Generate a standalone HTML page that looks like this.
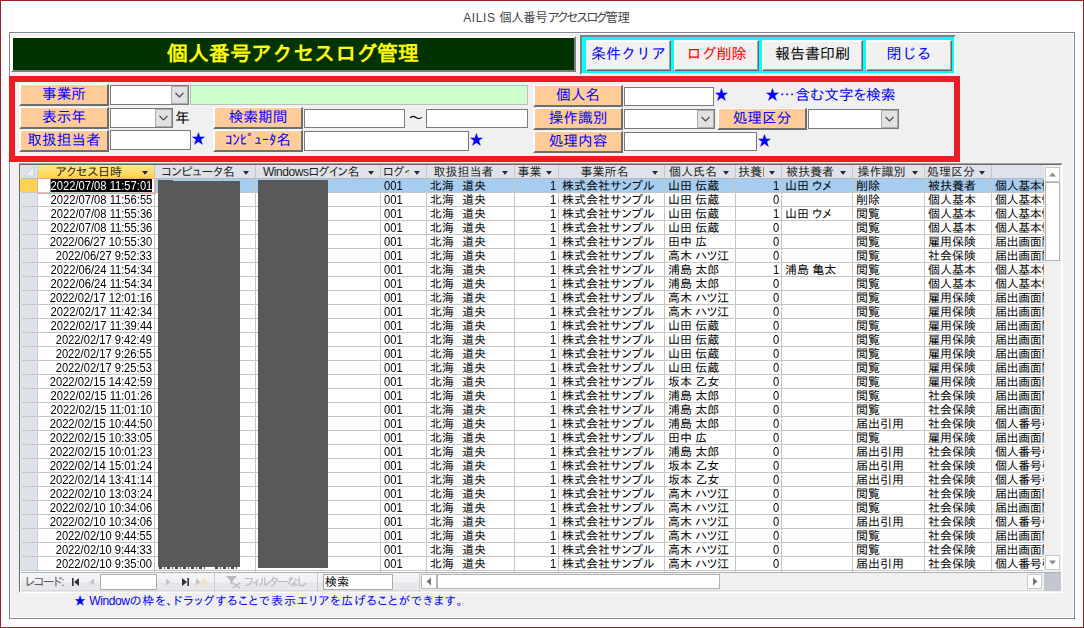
<!DOCTYPE html>
<html lang="ja"><head><meta charset="utf-8"><title>AILIS 個人番号アクセスログ管理</title>
<style>
html,body{margin:0;padding:0}
body{width:1084px;height:628px;position:relative;overflow:hidden;background:#fff;
 font-family:"Liberation Sans","IPAPGothic","IPAGothic",sans-serif;font-size:12px;color:#000}
.a{position:absolute;box-sizing:border-box}
#win{left:0;top:0;width:1084px;height:628px;border:1px solid #9c2026}
#ttl{left:0;top:9px;width:1084px;text-align:center;font-family:"Liberation Sans","Noto Sans CJK JP",sans-serif;font-size:12px;line-height:18px;color:#444;padding-left:9px}
#ttl span{letter-spacing:-2.2px}
#form{left:9px;top:32px;width:1066px;height:587px;background:#f0f0f0;border:1px solid #828790;box-shadow:inset 0 0 0 1px #fff}
#gbox{left:11px;top:36px;width:565px;height:36px;border-style:solid;border-width:2px;border-color:#fff #808080 #808080 #fff;background:#003300;
 color:#ffff00;font-weight:bold;font-size:21px;line-height:32px;text-align:center;font-family:"Liberation Sans","IPAGothic",sans-serif;padding-right:1px}
#cbox{left:580px;top:35px;width:376px;height:40px;border-style:solid;border-width:2px;border-color:#808080 #fff #fff #808080;background:#00ffff}
.tb{top:40px;height:31px;background:#f0f0f0;border-style:solid;border-width:1px;border-color:#fff #696969 #696969 #fff;
 font-family:"Liberation Sans","IPAGothic",sans-serif;font-size:15px;line-height:26px;text-align:center;color:#0000ff;box-shadow:inset -1px -1px 0 #a0a0a0, inset 1px 1px 0 #fff}
#red{left:9px;top:76px;width:951px;height:86px;border:6px solid #ed1c24}
.lb{width:90px;height:22px;background:#ffcc99;border-style:solid;border-width:1px 2px 2px 2px;border-color:#fff #6e6e6e #6e6e6e #fff;
 color:#0000ff;font-size:14.67px;line-height:18px;text-align:center;white-space:nowrap;letter-spacing:0px}
.in{background:#fff;border:1px solid #7a7a7a}
.dd{background:#e1e1e1;border:1px solid #adadad}
.dd svg{position:absolute;left:3px;top:5px}
.st{color:#0000ff;font-size:14.67px;line-height:16px;white-space:nowrap}
/* table */
#tfr{left:19px;top:163px;width:1044px;height:430px;border-style:solid;border-width:2px 2px 2px 1px;border-color:#a0a0a0 #fff #fff #696969;background:#fff}
.hd{top:165px;height:13px;background:#dfe3e9;font-size:12px;line-height:14px;white-space:nowrap;overflow:hidden;color:#222;text-align:center}
.hd.sel{background:linear-gradient(#ffe98f,#ffd24a)}
.ha{top:165px;height:13px;width:14px;background:#dfe3e9}
.ha.sel{background:linear-gradient(#ffe98f,#ffd24a)}
.ha i{position:absolute;left:2px;top:6px;width:0;height:0;border-left:3.5px solid transparent;border-right:3.5px solid transparent;border-top:4px solid #232834;filter:drop-shadow(0 1px 0 rgba(255,255,255,.7))}
.vl{width:1px;background:#c6c6c6;top:165px;height:407px}
.hl{height:1px;background:#c6c6c6;left:21px;width:1023px}
.c{height:13px;line-height:15px;font-size:12px;white-space:nowrap;overflow:hidden}
.n{display:inline-block;font-size:13px;transform:scaleX(.86);transform-origin:0 50%;position:relative;top:-1px}
.r .n{transform-origin:100% 50%;position:absolute;right:0;top:-1px}
.sp{letter-spacing:-4px}
.d{text-align:right}
.r{text-align:right}
.rs{left:20px;width:17px;height:13px;background:#dde1e8}
#nav{left:21px;top:573px;width:398px;height:19px;background:linear-gradient(#f4f5f7 0,#f0f1f4 45%,#e4e6ea 55%,#e6e8ec 100%)}
</style></head><body>
<div class="a" id="win"></div>
<div class="a" id="ttl"><b style="font-weight:normal;letter-spacing:.6px">AILIS </b>個人番号<span>アクセスログ</span>管理</div>
<div class="a" id="form"></div>
<div class="a" id="gbox">個人番号アクセスログ管理</div>
<div class="a" id="cbox"></div>
<div class="a tb" style="left:586px;width:85px">条件クリア</div>
<div class="a tb" style="left:674px;width:85px;color:#ff0000">ログ削除</div>
<div class="a tb" style="left:762px;width:101px;color:#000">報告書印刷</div>
<div class="a tb" style="left:866px;width:86px">閉じる</div>
<div class="a" id="red"></div>

<div class="a lb" style="left:19px;top:84px;width:90px">事業所</div>
<div class="a lb" style="left:19px;top:107px;width:90px">表示年</div>
<div class="a lb" style="left:19px;top:130px;width:90px">取扱担当者</div>
<div class="a in" style="left:110px;top:85px;width:79px;height:20px;"></div>
<div class="a dd" style="left:171px;top:86px;width:17px;height:18px"><svg width="9" height="6" viewBox="0 0 9 6"><path d="M0.5 0.8 L4.5 4.8 L8.5 0.8" fill="none" stroke="#444" stroke-width="1.2"/></svg></div>
<div class="a in" style="left:190px;top:85px;width:338px;height:20px;background:#ccffcc;border-color:#bdbdbd"></div>
<div class="a in" style="left:110px;top:108px;width:63px;height:20px;"></div>
<div class="a dd" style="left:155px;top:109px;width:17px;height:18px"><svg width="9" height="6" viewBox="0 0 9 6"><path d="M0.5 0.8 L4.5 4.8 L8.5 0.8" fill="none" stroke="#444" stroke-width="1.2"/></svg></div>
<div class="a" style="left:175px;top:109px;font-size:14.67px;line-height:18px">年</div>
<div class="a in" style="left:110px;top:130px;width:81px;height:20px;"></div>
<div class="a st" style="left:191px;top:131px">★</div>
<div class="a lb" style="left:213px;top:107px;width:90px">検索期間</div>
<div class="a lb" style="left:213px;top:130px;width:90px">ｺﾝﾋﾟｭｰﾀ名</div>
<div class="a in" style="left:304px;top:109px;width:101px;height:19px;"></div>
<div class="a" style="left:409px;top:109px;font-size:14.67px;line-height:18px">～</div>
<div class="a in" style="left:426px;top:109px;width:102px;height:19px;"></div>
<div class="a in" style="left:304px;top:131px;width:165px;height:20px;"></div>
<div class="a st" style="left:469px;top:132px">★</div>
<div class="a lb" style="left:533px;top:85px;width:90px">個人名</div>
<div class="a lb" style="left:533px;top:108px;width:90px">操作識別</div>
<div class="a lb" style="left:533px;top:131px;width:90px">処理内容</div>
<div class="a in" style="left:624px;top:87px;width:90px;height:19px;"></div>
<div class="a st" style="left:714px;top:87px">★</div>
<div class="a st" style="left:765px;top:87px;font-family:IPAPGothic,IPAGothic,sans-serif">★…<span style="margin-left:-3px"> 含む文字を検索</span></div>
<div class="a in" style="left:624px;top:109px;width:91px;height:20px;"></div>
<div class="a dd" style="left:697px;top:110px;width:17px;height:18px"><svg width="9" height="6" viewBox="0 0 9 6"><path d="M0.5 0.8 L4.5 4.8 L8.5 0.8" fill="none" stroke="#444" stroke-width="1.2"/></svg></div>
<div class="a lb" style="left:717px;top:108px;width:90px">処理区分</div>
<div class="a in" style="left:808px;top:109px;width:91px;height:20px;"></div>
<div class="a dd" style="left:881px;top:110px;width:17px;height:18px"><svg width="9" height="6" viewBox="0 0 9 6"><path d="M0.5 0.8 L4.5 4.8 L8.5 0.8" fill="none" stroke="#444" stroke-width="1.2"/></svg></div>
<div class="a in" style="left:624px;top:132px;width:133px;height:19px;"></div>
<div class="a st" style="left:757px;top:133px">★</div>
<div class="a" id="tfr"></div>
<div class="a" style="left:19px;top:164px;width:1042px;height:1px;background:#696969"></div>
<div class="a" style="left:20px;top:165px;width:17px;height:13px;background:#dde1e8"><svg width="17" height="13" style="position:absolute;left:0;top:0"><path d="M14 1.5 L14 11 L4.5 11 Z" fill="#eef0f4" stroke="#b9c6d9" stroke-width="0.8"/></svg></div>
<div class="a hd sel" style="left:38px;width:102px">アクセス日時</div>
<div class="a ha sel" style="left:140px"><i></i></div>
<div class="a hd" style="left:155px;width:86px">コンピュータ名</div>
<div class="a ha" style="left:241px"><i></i></div>
<div class="a hd" style="left:256px;width:110px;letter-spacing:-0.45px">Windowsログイン名</div>
<div class="a ha" style="left:366px"><i></i></div>
<div class="a hd" style="left:381px;width:31px"></div>
<div class="a hd" style="left:383px;width:26px;text-align:left">ログイン</div>
<div class="a ha" style="left:412px"><i></i></div>
<div class="a hd" style="left:427px;width:73px">取扱担当者</div>
<div class="a ha" style="left:500px"><i></i></div>
<div class="a hd" style="left:515px;width:29px">事業</div>
<div class="a ha" style="left:544px"><i></i></div>
<div class="a hd" style="left:559px;width:91px">事業所名</div>
<div class="a ha" style="left:650px"><i></i></div>
<div class="a hd" style="left:665px;width:56px">個人氏名</div>
<div class="a ha" style="left:721px"><i></i></div>
<div class="a hd" style="left:736px;width:31px"></div>
<div class="a hd" style="left:738px;width:26px;text-align:left">扶養区分</div>
<div class="a ha" style="left:767px"><i></i></div>
<div class="a hd" style="left:782px;width:56px">被扶養者</div>
<div class="a ha" style="left:838px"><i></i></div>
<div class="a hd" style="left:853px;width:57px">操作識別</div>
<div class="a ha" style="left:910px"><i></i></div>
<div class="a hd" style="left:925px;width:52px">処理区分</div>
<div class="a ha" style="left:977px"><i></i></div>
<div class="a hd" style="left:992px;width:52px"></div>
<div class="a hl" style="top:178px;background:#b4b9c2"></div>
<div class="a" style="left:38px;top:179px;width:1006px;height:13px;background:#a6cdf0"></div>
<div class="a" style="left:20px;top:179px;width:17px;height:13px;background:#ffd24d"></div>
<div class="a" style="left:38px;top:179px;width:116px;height:13px;background:#fff"></div>
<div class="a c r" style="top:179px;left:38px;width:114px"><span class="n" style="background:#000;color:#fff">2022/07/08 11:57:01</span></div>
<div class="a c" style="top:179px;left:384px;width:42px"><span class="n">001</span></div>
<div class="a c" style="top:179px;left:430px;width:84px">北海<span class="sp">　</span>道央</div>
<div class="a c r" style="top:179px;left:515px;width:41px"><span class="n">1</span></div>
<div class="a c" style="top:179px;left:562px;width:102px">株式会社サンプル</div>
<div class="a c" style="top:179px;left:668px;width:67px">山田 伝蔵</div>
<div class="a c r" style="top:179px;left:736px;width:43px"><span class="n">1</span></div>
<div class="a c" style="top:179px;left:785px;width:67px">山田 ウメ</div>
<div class="a c" style="top:179px;left:856px;width:68px">削除</div>
<div class="a c" style="top:179px;left:928px;width:63px">被扶養者</div>
<div class="a c" style="top:179px;left:995px;width:49px;letter-spacing:-0.4px">個人基本情報</div>
<div class="a hl" style="top:192px"></div>
<div class="a rs" style="top:193px"></div>
<div class="a c r" style="top:193px;left:38px;width:114px"><span class="n">2022/07/08 11:56:55</span></div>
<div class="a c" style="top:193px;left:384px;width:42px"><span class="n">001</span></div>
<div class="a c" style="top:193px;left:430px;width:84px">北海<span class="sp">　</span>道央</div>
<div class="a c r" style="top:193px;left:515px;width:41px"><span class="n">1</span></div>
<div class="a c" style="top:193px;left:562px;width:102px">株式会社サンプル</div>
<div class="a c" style="top:193px;left:668px;width:67px">山田 伝蔵</div>
<div class="a c r" style="top:193px;left:736px;width:43px"><span class="n">0</span></div>
<div class="a c" style="top:193px;left:856px;width:68px">削除</div>
<div class="a c" style="top:193px;left:928px;width:63px">個人基本</div>
<div class="a c" style="top:193px;left:995px;width:49px;letter-spacing:-0.4px">個人基本情報</div>
<div class="a hl" style="top:206px"></div>
<div class="a rs" style="top:207px"></div>
<div class="a c r" style="top:207px;left:38px;width:114px"><span class="n">2022/07/08 11:55:36</span></div>
<div class="a c" style="top:207px;left:384px;width:42px"><span class="n">001</span></div>
<div class="a c" style="top:207px;left:430px;width:84px">北海<span class="sp">　</span>道央</div>
<div class="a c r" style="top:207px;left:515px;width:41px"><span class="n">1</span></div>
<div class="a c" style="top:207px;left:562px;width:102px">株式会社サンプル</div>
<div class="a c" style="top:207px;left:668px;width:67px">山田 伝蔵</div>
<div class="a c r" style="top:207px;left:736px;width:43px"><span class="n">1</span></div>
<div class="a c" style="top:207px;left:785px;width:67px">山田 ウメ</div>
<div class="a c" style="top:207px;left:856px;width:68px">閲覧</div>
<div class="a c" style="top:207px;left:928px;width:63px">個人基本</div>
<div class="a c" style="top:207px;left:995px;width:49px;letter-spacing:-0.4px">個人基本情報</div>
<div class="a hl" style="top:220px"></div>
<div class="a rs" style="top:221px"></div>
<div class="a c r" style="top:221px;left:38px;width:114px"><span class="n">2022/07/08 11:55:36</span></div>
<div class="a c" style="top:221px;left:384px;width:42px"><span class="n">001</span></div>
<div class="a c" style="top:221px;left:430px;width:84px">北海<span class="sp">　</span>道央</div>
<div class="a c r" style="top:221px;left:515px;width:41px"><span class="n">1</span></div>
<div class="a c" style="top:221px;left:562px;width:102px">株式会社サンプル</div>
<div class="a c" style="top:221px;left:668px;width:67px">山田 伝蔵</div>
<div class="a c r" style="top:221px;left:736px;width:43px"><span class="n">0</span></div>
<div class="a c" style="top:221px;left:856px;width:68px">閲覧</div>
<div class="a c" style="top:221px;left:928px;width:63px">個人基本</div>
<div class="a c" style="top:221px;left:995px;width:49px;letter-spacing:-0.4px">個人基本情報</div>
<div class="a hl" style="top:234px"></div>
<div class="a rs" style="top:235px"></div>
<div class="a c r" style="top:235px;left:38px;width:114px"><span class="n">2022/06/27 10:55:30</span></div>
<div class="a c" style="top:235px;left:384px;width:42px"><span class="n">001</span></div>
<div class="a c" style="top:235px;left:430px;width:84px">北海<span class="sp">　</span>道央</div>
<div class="a c r" style="top:235px;left:515px;width:41px"><span class="n">1</span></div>
<div class="a c" style="top:235px;left:562px;width:102px">株式会社サンプル</div>
<div class="a c" style="top:235px;left:668px;width:67px">田中 広</div>
<div class="a c r" style="top:235px;left:736px;width:43px"><span class="n">0</span></div>
<div class="a c" style="top:235px;left:856px;width:68px">閲覧</div>
<div class="a c" style="top:235px;left:928px;width:63px">雇用保険</div>
<div class="a c" style="top:235px;left:995px;width:49px;letter-spacing:-0.4px">届出画面閲覧</div>
<div class="a hl" style="top:248px"></div>
<div class="a rs" style="top:249px"></div>
<div class="a c r" style="top:249px;left:38px;width:114px"><span class="n">2022/06/27 9:52:33</span></div>
<div class="a c" style="top:249px;left:384px;width:42px"><span class="n">001</span></div>
<div class="a c" style="top:249px;left:430px;width:84px">北海<span class="sp">　</span>道央</div>
<div class="a c r" style="top:249px;left:515px;width:41px"><span class="n">1</span></div>
<div class="a c" style="top:249px;left:562px;width:102px">株式会社サンプル</div>
<div class="a c" style="top:249px;left:668px;width:67px">高木 ハツ江</div>
<div class="a c r" style="top:249px;left:736px;width:43px"><span class="n">0</span></div>
<div class="a c" style="top:249px;left:856px;width:68px">閲覧</div>
<div class="a c" style="top:249px;left:928px;width:63px">社会保険</div>
<div class="a c" style="top:249px;left:995px;width:49px;letter-spacing:-0.4px">届出画面閲覧</div>
<div class="a hl" style="top:262px"></div>
<div class="a rs" style="top:263px"></div>
<div class="a c r" style="top:263px;left:38px;width:114px"><span class="n">2022/06/24 11:54:34</span></div>
<div class="a c" style="top:263px;left:384px;width:42px"><span class="n">001</span></div>
<div class="a c" style="top:263px;left:430px;width:84px">北海<span class="sp">　</span>道央</div>
<div class="a c r" style="top:263px;left:515px;width:41px"><span class="n">1</span></div>
<div class="a c" style="top:263px;left:562px;width:102px">株式会社サンプル</div>
<div class="a c" style="top:263px;left:668px;width:67px">浦島 太郎</div>
<div class="a c r" style="top:263px;left:736px;width:43px"><span class="n">1</span></div>
<div class="a c" style="top:263px;left:785px;width:67px">浦島 亀太</div>
<div class="a c" style="top:263px;left:856px;width:68px">閲覧</div>
<div class="a c" style="top:263px;left:928px;width:63px">個人基本</div>
<div class="a c" style="top:263px;left:995px;width:49px;letter-spacing:-0.4px">個人基本情報</div>
<div class="a hl" style="top:276px"></div>
<div class="a rs" style="top:277px"></div>
<div class="a c r" style="top:277px;left:38px;width:114px"><span class="n">2022/06/24 11:54:34</span></div>
<div class="a c" style="top:277px;left:384px;width:42px"><span class="n">001</span></div>
<div class="a c" style="top:277px;left:430px;width:84px">北海<span class="sp">　</span>道央</div>
<div class="a c r" style="top:277px;left:515px;width:41px"><span class="n">1</span></div>
<div class="a c" style="top:277px;left:562px;width:102px">株式会社サンプル</div>
<div class="a c" style="top:277px;left:668px;width:67px">浦島 太郎</div>
<div class="a c r" style="top:277px;left:736px;width:43px"><span class="n">0</span></div>
<div class="a c" style="top:277px;left:856px;width:68px">閲覧</div>
<div class="a c" style="top:277px;left:928px;width:63px">個人基本</div>
<div class="a c" style="top:277px;left:995px;width:49px;letter-spacing:-0.4px">個人基本情報</div>
<div class="a hl" style="top:290px"></div>
<div class="a rs" style="top:291px"></div>
<div class="a c r" style="top:291px;left:38px;width:114px"><span class="n">2022/02/17 12:01:16</span></div>
<div class="a c" style="top:291px;left:384px;width:42px"><span class="n">001</span></div>
<div class="a c" style="top:291px;left:430px;width:84px">北海<span class="sp">　</span>道央</div>
<div class="a c r" style="top:291px;left:515px;width:41px"><span class="n">1</span></div>
<div class="a c" style="top:291px;left:562px;width:102px">株式会社サンプル</div>
<div class="a c" style="top:291px;left:668px;width:67px">高木 ハツ江</div>
<div class="a c r" style="top:291px;left:736px;width:43px"><span class="n">0</span></div>
<div class="a c" style="top:291px;left:856px;width:68px">閲覧</div>
<div class="a c" style="top:291px;left:928px;width:63px">雇用保険</div>
<div class="a c" style="top:291px;left:995px;width:49px;letter-spacing:-0.4px">届出画面閲覧</div>
<div class="a hl" style="top:304px"></div>
<div class="a rs" style="top:305px"></div>
<div class="a c r" style="top:305px;left:38px;width:114px"><span class="n">2022/02/17 11:42:34</span></div>
<div class="a c" style="top:305px;left:384px;width:42px"><span class="n">001</span></div>
<div class="a c" style="top:305px;left:430px;width:84px">北海<span class="sp">　</span>道央</div>
<div class="a c r" style="top:305px;left:515px;width:41px"><span class="n">1</span></div>
<div class="a c" style="top:305px;left:562px;width:102px">株式会社サンプル</div>
<div class="a c" style="top:305px;left:668px;width:67px">高木 ハツ江</div>
<div class="a c r" style="top:305px;left:736px;width:43px"><span class="n">0</span></div>
<div class="a c" style="top:305px;left:856px;width:68px">閲覧</div>
<div class="a c" style="top:305px;left:928px;width:63px">雇用保険</div>
<div class="a c" style="top:305px;left:995px;width:49px;letter-spacing:-0.4px">届出画面閲覧</div>
<div class="a hl" style="top:318px"></div>
<div class="a rs" style="top:319px"></div>
<div class="a c r" style="top:319px;left:38px;width:114px"><span class="n">2022/02/17 11:39:44</span></div>
<div class="a c" style="top:319px;left:384px;width:42px"><span class="n">001</span></div>
<div class="a c" style="top:319px;left:430px;width:84px">北海<span class="sp">　</span>道央</div>
<div class="a c r" style="top:319px;left:515px;width:41px"><span class="n">1</span></div>
<div class="a c" style="top:319px;left:562px;width:102px">株式会社サンプル</div>
<div class="a c" style="top:319px;left:668px;width:67px">山田 伝蔵</div>
<div class="a c r" style="top:319px;left:736px;width:43px"><span class="n">0</span></div>
<div class="a c" style="top:319px;left:856px;width:68px">閲覧</div>
<div class="a c" style="top:319px;left:928px;width:63px">雇用保険</div>
<div class="a c" style="top:319px;left:995px;width:49px;letter-spacing:-0.4px">届出画面閲覧</div>
<div class="a hl" style="top:332px"></div>
<div class="a rs" style="top:333px"></div>
<div class="a c r" style="top:333px;left:38px;width:114px"><span class="n">2022/02/17 9:42:49</span></div>
<div class="a c" style="top:333px;left:384px;width:42px"><span class="n">001</span></div>
<div class="a c" style="top:333px;left:430px;width:84px">北海<span class="sp">　</span>道央</div>
<div class="a c r" style="top:333px;left:515px;width:41px"><span class="n">1</span></div>
<div class="a c" style="top:333px;left:562px;width:102px">株式会社サンプル</div>
<div class="a c" style="top:333px;left:668px;width:67px">山田 伝蔵</div>
<div class="a c r" style="top:333px;left:736px;width:43px"><span class="n">0</span></div>
<div class="a c" style="top:333px;left:856px;width:68px">閲覧</div>
<div class="a c" style="top:333px;left:928px;width:63px">雇用保険</div>
<div class="a c" style="top:333px;left:995px;width:49px;letter-spacing:-0.4px">届出画面閲覧</div>
<div class="a hl" style="top:346px"></div>
<div class="a rs" style="top:347px"></div>
<div class="a c r" style="top:347px;left:38px;width:114px"><span class="n">2022/02/17 9:26:55</span></div>
<div class="a c" style="top:347px;left:384px;width:42px"><span class="n">001</span></div>
<div class="a c" style="top:347px;left:430px;width:84px">北海<span class="sp">　</span>道央</div>
<div class="a c r" style="top:347px;left:515px;width:41px"><span class="n">1</span></div>
<div class="a c" style="top:347px;left:562px;width:102px">株式会社サンプル</div>
<div class="a c" style="top:347px;left:668px;width:67px">山田 伝蔵</div>
<div class="a c r" style="top:347px;left:736px;width:43px"><span class="n">0</span></div>
<div class="a c" style="top:347px;left:856px;width:68px">閲覧</div>
<div class="a c" style="top:347px;left:928px;width:63px">雇用保険</div>
<div class="a c" style="top:347px;left:995px;width:49px;letter-spacing:-0.4px">届出画面閲覧</div>
<div class="a hl" style="top:360px"></div>
<div class="a rs" style="top:361px"></div>
<div class="a c r" style="top:361px;left:38px;width:114px"><span class="n">2022/02/17 9:25:53</span></div>
<div class="a c" style="top:361px;left:384px;width:42px"><span class="n">001</span></div>
<div class="a c" style="top:361px;left:430px;width:84px">北海<span class="sp">　</span>道央</div>
<div class="a c r" style="top:361px;left:515px;width:41px"><span class="n">1</span></div>
<div class="a c" style="top:361px;left:562px;width:102px">株式会社サンプル</div>
<div class="a c" style="top:361px;left:668px;width:67px">山田 伝蔵</div>
<div class="a c r" style="top:361px;left:736px;width:43px"><span class="n">0</span></div>
<div class="a c" style="top:361px;left:856px;width:68px">閲覧</div>
<div class="a c" style="top:361px;left:928px;width:63px">雇用保険</div>
<div class="a c" style="top:361px;left:995px;width:49px;letter-spacing:-0.4px">届出画面閲覧</div>
<div class="a hl" style="top:374px"></div>
<div class="a rs" style="top:375px"></div>
<div class="a c r" style="top:375px;left:38px;width:114px"><span class="n">2022/02/15 14:42:59</span></div>
<div class="a c" style="top:375px;left:384px;width:42px"><span class="n">001</span></div>
<div class="a c" style="top:375px;left:430px;width:84px">北海<span class="sp">　</span>道央</div>
<div class="a c r" style="top:375px;left:515px;width:41px"><span class="n">1</span></div>
<div class="a c" style="top:375px;left:562px;width:102px">株式会社サンプル</div>
<div class="a c" style="top:375px;left:668px;width:67px">坂本 乙女</div>
<div class="a c r" style="top:375px;left:736px;width:43px"><span class="n">0</span></div>
<div class="a c" style="top:375px;left:856px;width:68px">閲覧</div>
<div class="a c" style="top:375px;left:928px;width:63px">雇用保険</div>
<div class="a c" style="top:375px;left:995px;width:49px;letter-spacing:-0.4px">届出画面閲覧</div>
<div class="a hl" style="top:388px"></div>
<div class="a rs" style="top:389px"></div>
<div class="a c r" style="top:389px;left:38px;width:114px"><span class="n">2022/02/15 11:01:26</span></div>
<div class="a c" style="top:389px;left:384px;width:42px"><span class="n">001</span></div>
<div class="a c" style="top:389px;left:430px;width:84px">北海<span class="sp">　</span>道央</div>
<div class="a c r" style="top:389px;left:515px;width:41px"><span class="n">1</span></div>
<div class="a c" style="top:389px;left:562px;width:102px">株式会社サンプル</div>
<div class="a c" style="top:389px;left:668px;width:67px">浦島 太郎</div>
<div class="a c r" style="top:389px;left:736px;width:43px"><span class="n">0</span></div>
<div class="a c" style="top:389px;left:856px;width:68px">閲覧</div>
<div class="a c" style="top:389px;left:928px;width:63px">社会保険</div>
<div class="a c" style="top:389px;left:995px;width:49px;letter-spacing:-0.4px">届出画面閲覧</div>
<div class="a hl" style="top:402px"></div>
<div class="a rs" style="top:403px"></div>
<div class="a c r" style="top:403px;left:38px;width:114px"><span class="n">2022/02/15 11:01:10</span></div>
<div class="a c" style="top:403px;left:384px;width:42px"><span class="n">001</span></div>
<div class="a c" style="top:403px;left:430px;width:84px">北海<span class="sp">　</span>道央</div>
<div class="a c r" style="top:403px;left:515px;width:41px"><span class="n">1</span></div>
<div class="a c" style="top:403px;left:562px;width:102px">株式会社サンプル</div>
<div class="a c" style="top:403px;left:668px;width:67px">浦島 太郎</div>
<div class="a c r" style="top:403px;left:736px;width:43px"><span class="n">0</span></div>
<div class="a c" style="top:403px;left:856px;width:68px">閲覧</div>
<div class="a c" style="top:403px;left:928px;width:63px">社会保険</div>
<div class="a c" style="top:403px;left:995px;width:49px;letter-spacing:-0.4px">届出画面閲覧</div>
<div class="a hl" style="top:416px"></div>
<div class="a rs" style="top:417px"></div>
<div class="a c r" style="top:417px;left:38px;width:114px"><span class="n">2022/02/15 10:44:50</span></div>
<div class="a c" style="top:417px;left:384px;width:42px"><span class="n">001</span></div>
<div class="a c" style="top:417px;left:430px;width:84px">北海<span class="sp">　</span>道央</div>
<div class="a c r" style="top:417px;left:515px;width:41px"><span class="n">1</span></div>
<div class="a c" style="top:417px;left:562px;width:102px">株式会社サンプル</div>
<div class="a c" style="top:417px;left:668px;width:67px">浦島 太郎</div>
<div class="a c r" style="top:417px;left:736px;width:43px"><span class="n">0</span></div>
<div class="a c" style="top:417px;left:856px;width:68px">届出引用</div>
<div class="a c" style="top:417px;left:928px;width:63px">社会保険</div>
<div class="a c" style="top:417px;left:995px;width:49px;letter-spacing:-0.4px">個人番号引用</div>
<div class="a hl" style="top:430px"></div>
<div class="a rs" style="top:431px"></div>
<div class="a c r" style="top:431px;left:38px;width:114px"><span class="n">2022/02/15 10:33:05</span></div>
<div class="a c" style="top:431px;left:384px;width:42px"><span class="n">001</span></div>
<div class="a c" style="top:431px;left:430px;width:84px">北海<span class="sp">　</span>道央</div>
<div class="a c r" style="top:431px;left:515px;width:41px"><span class="n">1</span></div>
<div class="a c" style="top:431px;left:562px;width:102px">株式会社サンプル</div>
<div class="a c" style="top:431px;left:668px;width:67px">田中 広</div>
<div class="a c r" style="top:431px;left:736px;width:43px"><span class="n">0</span></div>
<div class="a c" style="top:431px;left:856px;width:68px">閲覧</div>
<div class="a c" style="top:431px;left:928px;width:63px">雇用保険</div>
<div class="a c" style="top:431px;left:995px;width:49px;letter-spacing:-0.4px">届出画面閲覧</div>
<div class="a hl" style="top:444px"></div>
<div class="a rs" style="top:445px"></div>
<div class="a c r" style="top:445px;left:38px;width:114px"><span class="n">2022/02/15 10:01:23</span></div>
<div class="a c" style="top:445px;left:384px;width:42px"><span class="n">001</span></div>
<div class="a c" style="top:445px;left:430px;width:84px">北海<span class="sp">　</span>道央</div>
<div class="a c r" style="top:445px;left:515px;width:41px"><span class="n">1</span></div>
<div class="a c" style="top:445px;left:562px;width:102px">株式会社サンプル</div>
<div class="a c" style="top:445px;left:668px;width:67px">浦島 太郎</div>
<div class="a c r" style="top:445px;left:736px;width:43px"><span class="n">0</span></div>
<div class="a c" style="top:445px;left:856px;width:68px">届出引用</div>
<div class="a c" style="top:445px;left:928px;width:63px">社会保険</div>
<div class="a c" style="top:445px;left:995px;width:49px;letter-spacing:-0.4px">個人番号引用</div>
<div class="a hl" style="top:458px"></div>
<div class="a rs" style="top:459px"></div>
<div class="a c r" style="top:459px;left:38px;width:114px"><span class="n">2022/02/14 15:01:24</span></div>
<div class="a c" style="top:459px;left:384px;width:42px"><span class="n">001</span></div>
<div class="a c" style="top:459px;left:430px;width:84px">北海<span class="sp">　</span>道央</div>
<div class="a c r" style="top:459px;left:515px;width:41px"><span class="n">1</span></div>
<div class="a c" style="top:459px;left:562px;width:102px">株式会社サンプル</div>
<div class="a c" style="top:459px;left:668px;width:67px">坂本 乙女</div>
<div class="a c r" style="top:459px;left:736px;width:43px"><span class="n">0</span></div>
<div class="a c" style="top:459px;left:856px;width:68px">届出引用</div>
<div class="a c" style="top:459px;left:928px;width:63px">社会保険</div>
<div class="a c" style="top:459px;left:995px;width:49px;letter-spacing:-0.4px">個人番号引用</div>
<div class="a hl" style="top:472px"></div>
<div class="a rs" style="top:473px"></div>
<div class="a c r" style="top:473px;left:38px;width:114px"><span class="n">2022/02/14 13:41:14</span></div>
<div class="a c" style="top:473px;left:384px;width:42px"><span class="n">001</span></div>
<div class="a c" style="top:473px;left:430px;width:84px">北海<span class="sp">　</span>道央</div>
<div class="a c r" style="top:473px;left:515px;width:41px"><span class="n">1</span></div>
<div class="a c" style="top:473px;left:562px;width:102px">株式会社サンプル</div>
<div class="a c" style="top:473px;left:668px;width:67px">坂本 乙女</div>
<div class="a c r" style="top:473px;left:736px;width:43px"><span class="n">0</span></div>
<div class="a c" style="top:473px;left:856px;width:68px">届出引用</div>
<div class="a c" style="top:473px;left:928px;width:63px">社会保険</div>
<div class="a c" style="top:473px;left:995px;width:49px;letter-spacing:-0.4px">個人番号引用</div>
<div class="a hl" style="top:486px"></div>
<div class="a rs" style="top:487px"></div>
<div class="a c r" style="top:487px;left:38px;width:114px"><span class="n">2022/02/10 13:03:24</span></div>
<div class="a c" style="top:487px;left:384px;width:42px"><span class="n">001</span></div>
<div class="a c" style="top:487px;left:430px;width:84px">北海<span class="sp">　</span>道央</div>
<div class="a c r" style="top:487px;left:515px;width:41px"><span class="n">1</span></div>
<div class="a c" style="top:487px;left:562px;width:102px">株式会社サンプル</div>
<div class="a c" style="top:487px;left:668px;width:67px">高木 ハツ江</div>
<div class="a c r" style="top:487px;left:736px;width:43px"><span class="n">0</span></div>
<div class="a c" style="top:487px;left:856px;width:68px">閲覧</div>
<div class="a c" style="top:487px;left:928px;width:63px">社会保険</div>
<div class="a c" style="top:487px;left:995px;width:49px;letter-spacing:-0.4px">届出画面閲覧</div>
<div class="a hl" style="top:500px"></div>
<div class="a rs" style="top:501px"></div>
<div class="a c r" style="top:501px;left:38px;width:114px"><span class="n">2022/02/10 10:34:06</span></div>
<div class="a c" style="top:501px;left:384px;width:42px"><span class="n">001</span></div>
<div class="a c" style="top:501px;left:430px;width:84px">北海<span class="sp">　</span>道央</div>
<div class="a c r" style="top:501px;left:515px;width:41px"><span class="n">1</span></div>
<div class="a c" style="top:501px;left:562px;width:102px">株式会社サンプル</div>
<div class="a c" style="top:501px;left:668px;width:67px">高木 ハツ江</div>
<div class="a c r" style="top:501px;left:736px;width:43px"><span class="n">0</span></div>
<div class="a c" style="top:501px;left:856px;width:68px">閲覧</div>
<div class="a c" style="top:501px;left:928px;width:63px">社会保険</div>
<div class="a c" style="top:501px;left:995px;width:49px;letter-spacing:-0.4px">届出画面閲覧</div>
<div class="a hl" style="top:514px"></div>
<div class="a rs" style="top:515px"></div>
<div class="a c r" style="top:515px;left:38px;width:114px"><span class="n">2022/02/10 10:34:06</span></div>
<div class="a c" style="top:515px;left:384px;width:42px"><span class="n">001</span></div>
<div class="a c" style="top:515px;left:430px;width:84px">北海<span class="sp">　</span>道央</div>
<div class="a c r" style="top:515px;left:515px;width:41px"><span class="n">1</span></div>
<div class="a c" style="top:515px;left:562px;width:102px">株式会社サンプル</div>
<div class="a c" style="top:515px;left:668px;width:67px">高木 ハツ江</div>
<div class="a c r" style="top:515px;left:736px;width:43px"><span class="n">0</span></div>
<div class="a c" style="top:515px;left:856px;width:68px">届出引用</div>
<div class="a c" style="top:515px;left:928px;width:63px">社会保険</div>
<div class="a c" style="top:515px;left:995px;width:49px;letter-spacing:-0.4px">個人番号引用</div>
<div class="a hl" style="top:528px"></div>
<div class="a rs" style="top:529px"></div>
<div class="a c r" style="top:529px;left:38px;width:114px"><span class="n">2022/02/10 9:44:55</span></div>
<div class="a c" style="top:529px;left:384px;width:42px"><span class="n">001</span></div>
<div class="a c" style="top:529px;left:430px;width:84px">北海<span class="sp">　</span>道央</div>
<div class="a c r" style="top:529px;left:515px;width:41px"><span class="n">1</span></div>
<div class="a c" style="top:529px;left:562px;width:102px">株式会社サンプル</div>
<div class="a c" style="top:529px;left:668px;width:67px">高木 ハツ江</div>
<div class="a c r" style="top:529px;left:736px;width:43px"><span class="n">0</span></div>
<div class="a c" style="top:529px;left:856px;width:68px">閲覧</div>
<div class="a c" style="top:529px;left:928px;width:63px">社会保険</div>
<div class="a c" style="top:529px;left:995px;width:49px;letter-spacing:-0.4px">届出画面閲覧</div>
<div class="a hl" style="top:542px"></div>
<div class="a rs" style="top:543px"></div>
<div class="a c r" style="top:543px;left:38px;width:114px"><span class="n">2022/02/10 9:44:33</span></div>
<div class="a c" style="top:543px;left:384px;width:42px"><span class="n">001</span></div>
<div class="a c" style="top:543px;left:430px;width:84px">北海<span class="sp">　</span>道央</div>
<div class="a c r" style="top:543px;left:515px;width:41px"><span class="n">1</span></div>
<div class="a c" style="top:543px;left:562px;width:102px">株式会社サンプル</div>
<div class="a c" style="top:543px;left:668px;width:67px">高木 ハツ江</div>
<div class="a c r" style="top:543px;left:736px;width:43px"><span class="n">0</span></div>
<div class="a c" style="top:543px;left:856px;width:68px">閲覧</div>
<div class="a c" style="top:543px;left:928px;width:63px">社会保険</div>
<div class="a c" style="top:543px;left:995px;width:49px;letter-spacing:-0.4px">届出画面閲覧</div>
<div class="a hl" style="top:556px"></div>
<div class="a rs" style="top:557px"></div>
<div class="a c r" style="top:557px;left:38px;width:114px"><span class="n">2022/02/10 9:35:00</span></div>
<div class="a c" style="top:557px;left:384px;width:42px"><span class="n">001</span></div>
<div class="a c" style="top:557px;left:430px;width:84px">北海<span class="sp">　</span>道央</div>
<div class="a c r" style="top:557px;left:515px;width:41px"><span class="n">1</span></div>
<div class="a c" style="top:557px;left:562px;width:102px">株式会社サンプル</div>
<div class="a c" style="top:557px;left:668px;width:67px">高木 ハツ江</div>
<div class="a c r" style="top:557px;left:736px;width:43px"><span class="n">0</span></div>
<div class="a c" style="top:557px;left:856px;width:68px">届出引用</div>
<div class="a c" style="top:557px;left:928px;width:63px">社会保険</div>
<div class="a c" style="top:557px;left:995px;width:49px;letter-spacing:-0.4px">個人番号引用</div>
<div class="a hl" style="top:570px"></div>
<div class="a vl" style="left:37px;background:#c9ced8"></div>
<div class="a vl" style="left:154px"></div>
<div class="a vl" style="left:255px"></div>
<div class="a vl" style="left:380px"></div>
<div class="a vl" style="left:426px"></div>
<div class="a vl" style="left:514px"></div>
<div class="a vl" style="left:558px"></div>
<div class="a vl" style="left:664px"></div>
<div class="a vl" style="left:735px"></div>
<div class="a vl" style="left:781px"></div>
<div class="a vl" style="left:852px"></div>
<div class="a vl" style="left:924px"></div>
<div class="a vl" style="left:991px"></div>
<div class="a" style="left:37px;top:178px;width:119px;height:16px;border:1px solid #f8a0a0"></div>
<div class="a" style="left:158px;top:181px;width:82px;height:386px;background:#595959"></div>
<div class="a" style="left:159px;top:567px;width:78px;height:2px;background:repeating-linear-gradient(90deg,#444 0,#444 3px,#fff 3px,#fff 5px,#555 5px,#555 6px,#fff 6px,#fff 8px)"></div>
<div class="a" style="left:205px;top:567px;width:8px;height:2px;background:#fff"></div>
<div class="a" style="left:158px;top:180px;width:15px;height:2px;background:#595959"></div>
<div class="a" style="left:258px;top:180px;width:70px;height:388px;background:#595959"></div>
<div class="a" style="left:1044px;top:165px;width:17px;height:407px;background:#f0f0f0"></div>
<div class="a" style="left:1045px;top:167px;width:15px;height:15px;background:#fff;border:1px solid #c9c9c9"><svg width="13" height="13" style="position:absolute;left:0;top:0"><path d="M3 8.5 L6.5 4.5 L10 8.5 Z" fill="#8a8a8a"/></svg></div>
<div class="a" style="left:1045px;top:182px;width:15px;height:79px;background:#fff;border:1px solid #b0b0b0"></div>
<div class="a" style="left:1045px;top:555px;width:15px;height:15px;background:#fff;border:1px solid #c9c9c9"><svg width="13" height="13" style="position:absolute;left:0;top:0"><path d="M3 4.5 L6.5 8.5 L10 4.5 Z" fill="#8a8a8a"/></svg></div>
<div class="a" style="left:21px;top:572px;width:1040px;height:1px;background:#a9b1be"></div>
<div class="a" style="left:21px;top:573px;width:1040px;height:19px;background:#f0f0f0"></div>
<div class="a" id="nav"></div>
<div class="a" style="left:25px;top:575px;font-size:12px;line-height:14px;color:#5a5a5a;letter-spacing:-1px">レコード:</div>
<svg class="a" style="left:70px;top:577px" width="140" height="10"><path d="M2 1 h1.6 v8 h-1.6 z M9 1 v8 l-5 -4 z" fill="#333"/><path d="M24 1.5 v7 l-4.5 -3.5 z" fill="#c4c4c4"/><path d="M96 1.5 v7 l4.5 -3.5 z" fill="#c4c4c4"/><path d="M112 1 v8 l5 -4 z M117.4 1 h1.6 v8 h-1.6 z" fill="#333"/><path d="M126 1.5 v7 l4.5 -3.5 z" fill="#c4c4c4"/><path d="M134 1 v8 M130 5 h8 M131.2 2.2 l5.6 5.6 M136.800 2.2 l-5.6 5.6" stroke="#f1e3b0" stroke-width="1.2" fill="none"/></svg>
<div class="a" style="left:100px;top:574px;width:57px;height:16px;background:#fff;border:1px solid #ababab"></div>
<div class="a" style="left:214px;top:573px;width:1px;height:19px;background:#c8ccd4"></div>
<svg class="a" style="left:225px;top:575px" width="18" height="14"><path d="M1 1 h11 l-4.5 5 v4 l-2 -1.5 v-2.5 z" fill="#b9b9b9"/><path d="M8 8 l7 5 M15 8 l-7 5" stroke="#b9b9b9" stroke-width="1.3"/></svg>
<div class="a" style="left:244px;top:575px;font-size:12px;line-height:14px;color:#b5b5b5;letter-spacing:-1.5px">フィルターなし</div>
<div class="a" style="left:317px;top:573px;width:1px;height:19px;background:#c8ccd4"></div>
<div class="a" style="left:323px;top:574px;width:70px;height:16px;background:#fff;border:1px solid #ababab;font-size:12px;line-height:14px;padding-left:1px">検索</div>
<div class="a" style="left:419px;top:573px;width:1px;height:19px;background:#c8ccd4"></div>
<div class="a" style="left:421px;top:574px;width:16px;height:15px;background:#fff;border:1px solid #b8b8b8"><svg width="14" height="13" style="position:absolute;left:0;top:0"><path d="M9 2.5 v8 l-4.5 -4 z" fill="#777"/></svg></div>
<div class="a" style="left:437px;top:574px;width:283px;height:15px;background:#fff;border:1px solid #b0b0b0"></div>
<div class="a" style="left:1027px;top:574px;width:15px;height:15px;background:#fff;border:1px solid #c9c9c9"><svg width="13" height="13" style="position:absolute;left:0;top:0"><path d="M5 2.500 v8 l4.5 -4 z" fill="#777"/></svg></div>
<div class="a" style="left:1044px;top:573px;width:17px;height:18px;background:#c2c6cf"></div>
<div class="a" style="left:21px;top:590px;width:1023px;height:1px;background:#d9d9d9"></div>
<div class="a" style="left:74px;top:594px;font-size:12px;line-height:15px;color:#0000ff;white-space:nowrap">★ <span style="letter-spacing:-0.4px">Window</span><span style="letter-spacing:.93px">の枠を、ドラッグすることで表示エリアを広げることができます。</span></div>
</body></html>
